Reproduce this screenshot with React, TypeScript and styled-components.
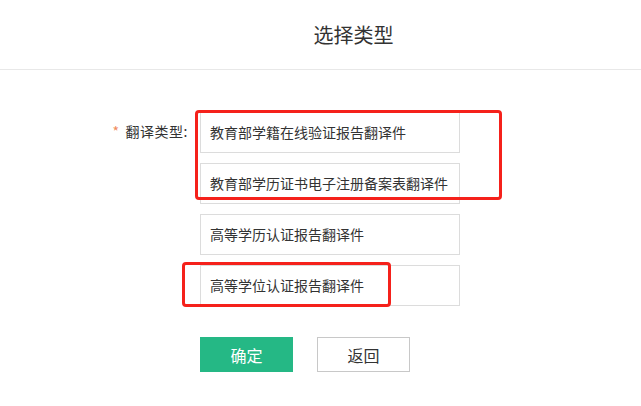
import styled, { createGlobalStyle } from "styled-components";

const GlobalStyle = createGlobalStyle`
  body {
    margin: 0;
    background: #fff;
    font-family: "Noto Sans CJK SC", "Microsoft YaHei", sans-serif;
    color: #333;
  }
`;

const options = [
  "教育部学籍在线验证报告翻译件",
  "教育部学历证书电子注册备案表翻译件",
  "高等学历认证报告翻译件",
  "高等学位认证报告翻译件",
];

const App = () => {
  return (
    <Page>
      <GlobalStyle />
      <Header>
        <Title>选择类型</Title>
      </Header>

      <Form>
        <Label>
          <Required>*</Required>翻译类型:
        </Label>
        <Options>
          {options.map((text) => (
            <Option key={text}>{text}</Option>
          ))}
          <Highlight $left={-5} $top={-2} $width={307} $height={90} />
          <Highlight $left={-18} $top={150} $width={209} $height={45} />
        </Options>

        <Actions>
          <Button $primary>确定</Button>
          <Button>返回</Button>
        </Actions>
      </Form>
    </Page>
  );
};

const Page = styled.div`
  width: 641px;
  height: 406px;
  overflow: hidden;
`;

const Header = styled.div`
  height: 69px;
  display: flex;
  align-items: center;
  justify-content: center;
  padding-left: 66px;
  border-bottom: 1px solid #e8e8e8;
`;

const Title = styled.h2`
  margin: 0;
  font-size: 20px;
  font-weight: normal;
  line-height: 24px;
  color: #333;
`;

const Form = styled.div`
  display: grid;
  grid-template-columns: 188px 260px;
  column-gap: 12px;
  row-gap: 31px;
  padding-top: 42px;
`;

const Label = styled.div`
  text-align: right;
  font-size: 14px;
  line-height: 38px;
  color: #333;
  letter-spacing: 0.5px;
`;

const Required = styled.span`
  color: #f08a5d;
  margin-right: 6px;
`;

const Options = styled.div`
  position: relative;
  display: flex;
  flex-direction: column;
  gap: 10px;
`;

const Option = styled.div`
  box-sizing: border-box;
  height: 41px;
  display: flex;
  align-items: center;
  padding: 0 0 2px 9px;
  border: 1px solid #dcdcdc;
  font-size: 14px;
  color: #333;
  white-space: nowrap;
`;

const Highlight = styled.div<{
  $left: number;
  $top: number;
  $width: number;
  $height: number;
}>`
  position: absolute;
  left: ${(p) => p.$left}px;
  top: ${(p) => p.$top}px;
  width: ${(p) => p.$width}px;
  height: ${(p) => p.$height}px;
  box-sizing: border-box;
  border: 3px solid #f5211b;
  border-radius: 4px;
  pointer-events: none;
`;

const Actions = styled.div`
  grid-column: 2;
  display: flex;
  gap: 24px;
`;

const Button = styled.button<{ $primary?: boolean }>`
  box-sizing: border-box;
  width: 93px;
  height: 35px;
  padding: 0;
  font-family: inherit;
  font-size: 16px;
  cursor: pointer;
  border: 1px solid ${(p) => (p.$primary ? "#25b885" : "#c8c8c8")};
  background: ${(p) => (p.$primary ? "#25b885" : "#fff")};
  color: ${(p) => (p.$primary ? "#fff" : "#333")};
`;

export default App;
